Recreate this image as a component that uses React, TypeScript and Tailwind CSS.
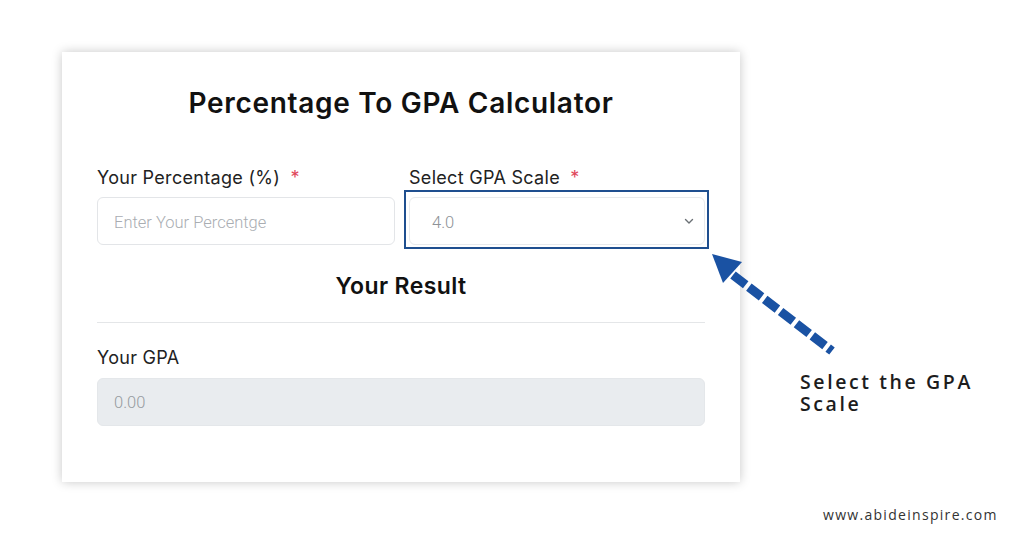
import React from "react";

export default function App() {
  return (
    <div className="relative w-[1024px] h-[536px] bg-white overflow-hidden" style={{ fontFamily: "Inter, 'Noto Sans', sans-serif" }}>
      <div className="ml-[62px] mt-[52px] w-[678px] h-[430px] bg-white shadow-[0_0_10px_rgba(0,0,0,0.22)] px-[35px] pt-[33px]">
        <h1 className="text-center text-[28px] leading-[36px] font-semibold text-[#111] tracking-[0.7px]">
          Percentage To GPA Calculator
        </h1>
        <div className="grid grid-cols-2 gap-x-[12px] mt-[45px]">
          <div>
            <label className="block text-[18px] leading-[24px] text-[#222] tracking-[0.3px]">
              Your Percentage (%) <span className="text-[#e0475b] ml-[5px]">*</span>
            </label>
            <div className="mt-[7px] h-[48px] rounded-[6px] border border-[#e3e5e8] flex items-center px-[16px] pt-[5px]">
              <span className="text-[16.5px] text-[#a9adb2] font-light" style={{ fontFamily: "Roboto, sans-serif" }}>Enter Your Percentge</span>
            </div>
          </div>
          <div>
            <label className="block text-[18px] leading-[24px] text-[#222] ml-[2px] tracking-[0.3px]">
              Select GPA Scale <span className="text-[#e0475b] ml-[5px]">*</span>
            </label>
            <div className="relative mt-[7px] ml-[2px]">
              <div className="h-[48px] rounded-[6px] border border-[#e8eaec] flex items-center justify-between pl-[22px] pr-[10px]">
                <span className="text-[16.5px] text-[#8e9297] font-light pt-[5px]" style={{ fontFamily: "Roboto, sans-serif" }}>4.0</span>
                <svg width="10" height="7" viewBox="0 0 10 7" fill="none">
                  <path d="M1.5 1.5 L5 5 L8.5 1.5" stroke="#6b7075" strokeWidth="1.4" strokeLinecap="round" strokeLinejoin="round" />
                </svg>
              </div>
              <div className="absolute -left-[5px] -right-[4px] -top-[7px] -bottom-[4px] border-2 border-[#1f4f8f]"></div>
            </div>
          </div>
        </div>
        <h2 className="text-center text-[23px] leading-[30px] font-semibold text-[#111] mt-[26px] tracking-[0.4px]">Your Result</h2>
        <div className="h-px bg-[#e4e6e8] mt-[21px]"></div>
        <label className="block text-[18px] leading-[24px] text-[#222] mt-[23px] tracking-[0.3px]">Your GPA</label>
        <div className="mt-[8px] h-[48px] rounded-[6px] bg-[#e9ecef] border border-[#e4e7ea] flex items-center px-[16px] pt-[3px]">
          <span className="text-[16.5px] text-[#969ba0] font-light" style={{ fontFamily: "Roboto, sans-serif" }}>0.00</span>
        </div>
      </div>

      <svg className="absolute left-[700px] top-[240px]" width="150" height="125" viewBox="700 240 150 125">
        <line x1="733" y1="275" x2="832" y2="351" stroke="#1a52a3" strokeWidth="9" strokeDasharray="16 4" />
        <polygon points="712,254 742,262 723,283" fill="#1a52a3" />
      </svg>

      <div className="absolute left-[800px] top-[371px] text-[19.5px] leading-[22px] font-semibold text-[#1d1d1d] tracking-[2.6px]" style={{ fontFamily: "'Open Sans', sans-serif" }}>
        <div>Select the GPA</div>
        <div>Scale</div>
      </div>

      <div className="absolute left-[823px] top-[506px] text-[14px] leading-[18px] text-[#333] tracking-[1.3px]" style={{ fontFamily: "'Open Sans', sans-serif" }}>
        www.abideinspire.com
      </div>
    </div>
  );
}
